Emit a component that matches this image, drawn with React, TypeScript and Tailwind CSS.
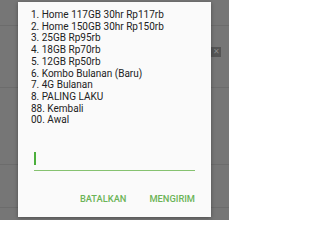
const items = [
  "1. Home 117GB 30hr Rp117rb",
  "2. Home 150GB 30hr Rp150rb",
  "3. 25GB Rp95rb",
  "4. 18GB Rp70rb",
  "5. 12GB Rp50rb",
  "6. Kombo Bulanan (Baru)",
  "7. 4G Bulanan",
  "8. PALING LAKU",
  "88. Kembali",
  "00. Awal",
];

export default function App() {
  return (
    <div
      className="relative h-[220px] w-[229px] overflow-hidden bg-[#767676]"
      style={{ fontFamily: "Roboto, 'Noto Sans', sans-serif" }}
    >
      {/* faint list dividers of the page behind the dim */}
      <div aria-hidden className="absolute left-0 right-0 top-[25px] h-px bg-[#6c6c6c]" />
      <div aria-hidden className="absolute left-0 right-0 top-[87px] h-px bg-[#6c6c6c]" />
      <div aria-hidden className="absolute left-0 right-0 top-[164px] h-px bg-[#6c6c6c]" />
      <div aria-hidden className="absolute left-0 right-0 top-[207px] h-px bg-[#6c6c6c]" />
      <div
        aria-hidden
        className="absolute left-[211px] top-[47px] flex h-[10px] w-[10px] items-center justify-center bg-[#555555] text-[8px] leading-none text-[#8a8a8a]"
      >
        ✕
      </div>

      {/* dialog */}
      <div className="relative ml-[18px] mt-[2px] flex h-[215px] w-[193px] flex-col bg-[#fafafa] shadow-[0_1px_4px_rgba(0,0,0,0.35)]">
        <div className="pl-[13px] pt-[7px] text-[10px] leading-[11.7px] text-[#222222]">
          {items.map((t) => (
            <div key={t}>{t}</div>
          ))}
        </div>

        <div className="mx-[16px] mt-[26px] flex h-[19px] items-start border-b border-[#86c270]">
          <div className="h-[13px] w-[1.5px] bg-[#4caf3c]" />
        </div>

        <div className="mr-[16px] mt-[23px] flex justify-end gap-[23px] text-[9.3px] font-medium leading-none text-[#6cb457]">
          <span>BATALKAN</span>
          <span>MENGIRIM</span>
        </div>
      </div>
    </div>
  );
}
